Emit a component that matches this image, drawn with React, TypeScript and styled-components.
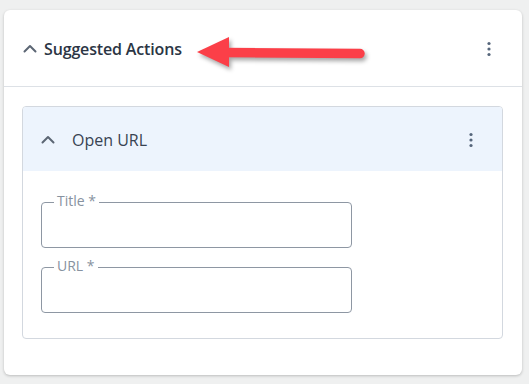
import React from "react";
import styled, { createGlobalStyle } from "styled-components";

const Global = createGlobalStyle`
  html, body { margin: 0; padding: 0; background: #eff0f0; }
  body { font-family: "Open Sans", "Noto Sans", sans-serif; }
  * { box-sizing: border-box; }
`;

const Page = styled.div`
  padding: 10px 7px 9px 4px;
`;

const Card = styled.section`
  position: relative;
  background: #ffffff;
  border-radius: 6px;
  box-shadow: 0 1px 3px rgba(0, 0, 0, 0.22);
`;

const Header = styled.header`
  display: flex;
  align-items: center;
  height: 77px;
  padding: 2px 25px 0 18px;
  border-bottom: 1px solid #dde1e6;
`;

const Title = styled.h2`
  flex: 1;
  margin: 0 0 0 6px;
  font-size: 16px;
  font-weight: 600;
  color: #2b3544;
  letter-spacing: -0.15px;
`;

const IconButton = styled.span`
  display: inline-flex;
  width: 16px;
  height: 16px;
  align-items: center;
  justify-content: center;
`;

const Body = styled.div`
  padding: 19px 19px 36px 18px;
`;

const Inner = styled.div`
  border: 1px solid #d3d8df;
  border-radius: 4px;
  overflow: hidden;
`;

const InnerHeader = styled.div`
  display: flex;
  align-items: center;
  height: 64px;
  padding: 2px 23px 0 17px;
  background: #edf4fd;
`;

const InnerTitle = styled.span`
  flex: 1;
  margin-left: 16px;
  font-size: 16px;
  color: #384352;
`;

const Form = styled.div`
  display: flex;
  flex-direction: column;
  gap: 19px;
  padding: 31px 0 25px 18px;
`;

const Field = styled.div`
  position: relative;
  width: 311px;
  height: 46px;
  border: 1px solid #8e97a3;
  border-radius: 4px;
`;

const Label = styled.label`
  position: absolute;
  top: -10px;
  left: 12px;
  padding: 0 3px;
  background: #ffffff;
  font-size: 14px;
  line-height: 16px;
  color: #8792a0;
`;

const Arrow = styled.svg`
  position: absolute;
  left: 186px;
  top: 20px;
  overflow: visible;
  filter: drop-shadow(2px 3px 2px rgba(0, 0, 0, 0.35));
`;

const Chevron = ({ color }: { color: string }) => (
  <svg width="16" height="16" viewBox="0 0 16 16">
    <path d="M2.5 10.5 L8 5 L13.5 10.5" fill="none" stroke={color} strokeWidth="2" strokeLinecap="round" strokeLinejoin="round" />
  </svg>
);

const Kebab = () => (
  <svg width="16" height="16" viewBox="0 0 16 16">
    <circle cx="8" cy="2.5" r="1.6" fill="#56667b" />
    <circle cx="8" cy="8" r="1.6" fill="#56667b" />
    <circle cx="8" cy="13.5" r="1.6" fill="#56667b" />
  </svg>
);

export default function App() {
  return (
    <Page>
      <Global />
      <Card>
        <Header>
          <IconButton><Chevron color="#5c6674" /></IconButton>
          <Title>Suggested Actions</Title>
          <IconButton><Kebab /></IconButton>
        </Header>
        <Body>
          <Inner>
            <InnerHeader>
              <IconButton><Chevron color="#5c6674" /></IconButton>
              <InnerTitle>Open URL</InnerTitle>
              <IconButton><Kebab /></IconButton>
            </InnerHeader>
            <Form>
              <Field><Label>Title *</Label></Field>
              <Field><Label>URL *</Label></Field>
            </Form>
          </Inner>
        </Body>
        <Arrow width="180" height="45" viewBox="0 0 180 45">
          <line x1="32" y1="22.5" x2="170" y2="23.5" stroke="#fb3f48" strokeWidth="9.5" strokeLinecap="round" />
          <polygon points="7,22 39,7 39,37" fill="#fb3f48" />
        </Arrow>
      </Card>
    </Page>
  );
}
